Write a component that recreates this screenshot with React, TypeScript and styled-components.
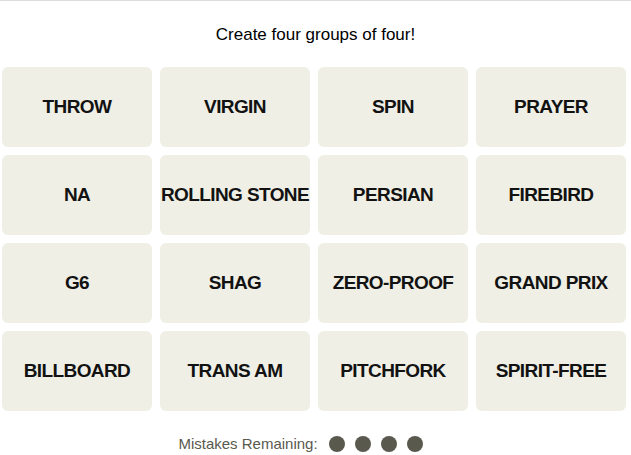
import styled, { createGlobalStyle } from "styled-components";

const GlobalStyle = createGlobalStyle`
  html, body {
    margin: 0;
    padding: 0;
    background: #ffffff;
  }
  body {
    font-family: "Liberation Sans", Arial, sans-serif;
  }
`;

const words = [
  "THROW", "VIRGIN", "SPIN", "PRAYER",
  "NA", "ROLLING STONE", "PERSIAN", "FIREBIRD",
  "G6", "SHAG", "ZERO-PROOF", "GRAND PRIX",
  "BILLBOARD", "TRANS AM", "PITCHFORK", "SPIRIT-FREE",
];

const Page = styled.div`
  width: 631px;
  height: 455px;
  border-top: 1px solid #dcdcdc;
  box-sizing: border-box;
  display: flex;
  flex-direction: column;
  align-items: flex-start;
`;

const Prompt = styled.p`
  align-self: stretch;
  margin: 24px 0 0;
  text-align: center;
  font-family: "Liberation Sans", Arial, sans-serif;
  font-size: 17px;
  line-height: 20px;
  color: #000;
`;

const Board = styled.div`
  margin: 22px 0 0 2px;
  display: grid;
  grid-template-columns: repeat(4, 150px);
  grid-auto-rows: 80px;
  gap: 8px;
`;

const Tile = styled.button`
  border: none;
  border-radius: 6px;
  background: #efefe6;
  color: #121212;
  font-family: "Liberation Sans", Arial, sans-serif;
  font-weight: 700;
  font-size: 19px;
  letter-spacing: -0.6px;
  padding: 0;
  display: flex;
  align-items: center;
  justify-content: center;
  white-space: nowrap;
  cursor: pointer;
`;

const Mistakes = styled.div`
  align-self: stretch;
  margin-top: 24px;
  padding-right: 30px;
  display: flex;
  justify-content: center;
  align-items: center;
  gap: 10px;
  font-family: "Liberation Sans", Arial, sans-serif;
  font-size: 15px;
  color: #5a594e;
`;

const Label = styled.span`
  margin-right: 1px;
`;

const Dot = styled.span`
  width: 16px;
  height: 16px;
  border-radius: 50%;
  background: #5a594e;
`;

export default function App() {
  return (
    <>
      <GlobalStyle />
      <Page>
        <Prompt>Create four groups of four!</Prompt>
        <Board>
          {words.map((w) => (
            <Tile key={w}>{w}</Tile>
          ))}
        </Board>
        <Mistakes>
          <Label>Mistakes Remaining:</Label>
          {[0, 1, 2, 3].map((i) => (
            <Dot key={i} />
          ))}
        </Mistakes>
      </Page>
    </>
  );
}
